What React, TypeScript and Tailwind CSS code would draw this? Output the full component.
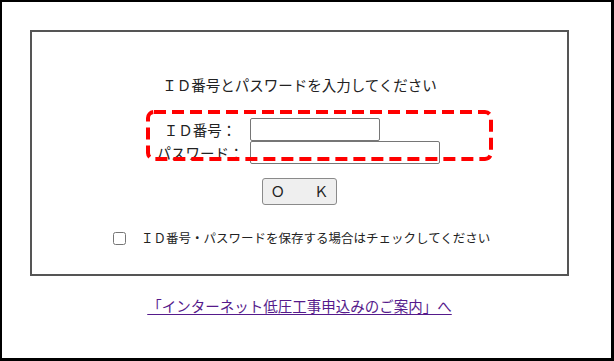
const jp = "font-['Noto_Sans_CJK_JP','Noto_Sans',sans-serif]";

export default function App() {
  return (
    <div
      className={`relative h-[361px] w-[614px] overflow-hidden border-l-2 border-t-2 border-r-[3px] border-b-[3px] border-black bg-white text-[#222] ${jp}`}
    >
      <div className="ml-[28px] mt-[28px] w-[539px]">
        <div className="relative h-[246px] border-2 border-[#555]">
          <p className="mt-[43px] text-center text-[14.5px] leading-[20px]">
            ＩＤ番号とパスワードを入力してください
          </p>

          <div className="ml-[118px] mt-[23px] grid grid-cols-[100px_auto] items-center">
            <span className="text-center text-[14.5px] leading-[20px]">ＩＤ番号：</span>
            <input
              type="text"
              className="h-[23px] w-[130px] rounded-[2px] border border-[#767676] bg-white px-1 outline-none"
            />
            <span className="text-center text-[14.5px] leading-[20px]">パスワード：</span>
            <input
              type="password"
              className="h-[23px] w-[190px] rounded-[2px] border border-[#767676] bg-white px-1 outline-none"
            />
          </div>

          {/* red annotation frame */}
          <svg
            className="pointer-events-none absolute left-[114px] top-[78px]"
            width="347"
            height="51"
            viewBox="0 0 347 51"
          >
            <rect
              x="2"
              y="2"
              width="343"
              height="47"
              rx="6"
              fill="none"
              stroke="#ff0000"
              strokeWidth="4"
              strokeDasharray="12 6"
            />
          </svg>

          <div className="mt-[14px] flex justify-center">
            <button
              type="button"
              className="h-[27px] w-[75px] rounded-[3px] border border-[#8a8a8a] bg-[#efefef] text-[14.5px] leading-none text-[#222]"
            >
              Ｏ　　Ｋ
            </button>
          </div>

          <label className="ml-[81px] mt-[23px] flex items-center gap-[15px] leading-[20px]">
            <input type="checkbox" className="m-0 h-[13px] w-[13px]" />
            <span className="text-[12.5px]">ＩＤ番号・パスワードを保存する場合はチェックしてください</span>
          </label>
        </div>

        <div className="mt-[19px] text-center leading-[20px]">
          <a href="#" className="text-[14.5px] text-[#551a8b] underline underline-offset-2">
            「インターネット低圧工事申込みのご案内」へ
          </a>
        </div>
      </div>
    </div>
  );
}
